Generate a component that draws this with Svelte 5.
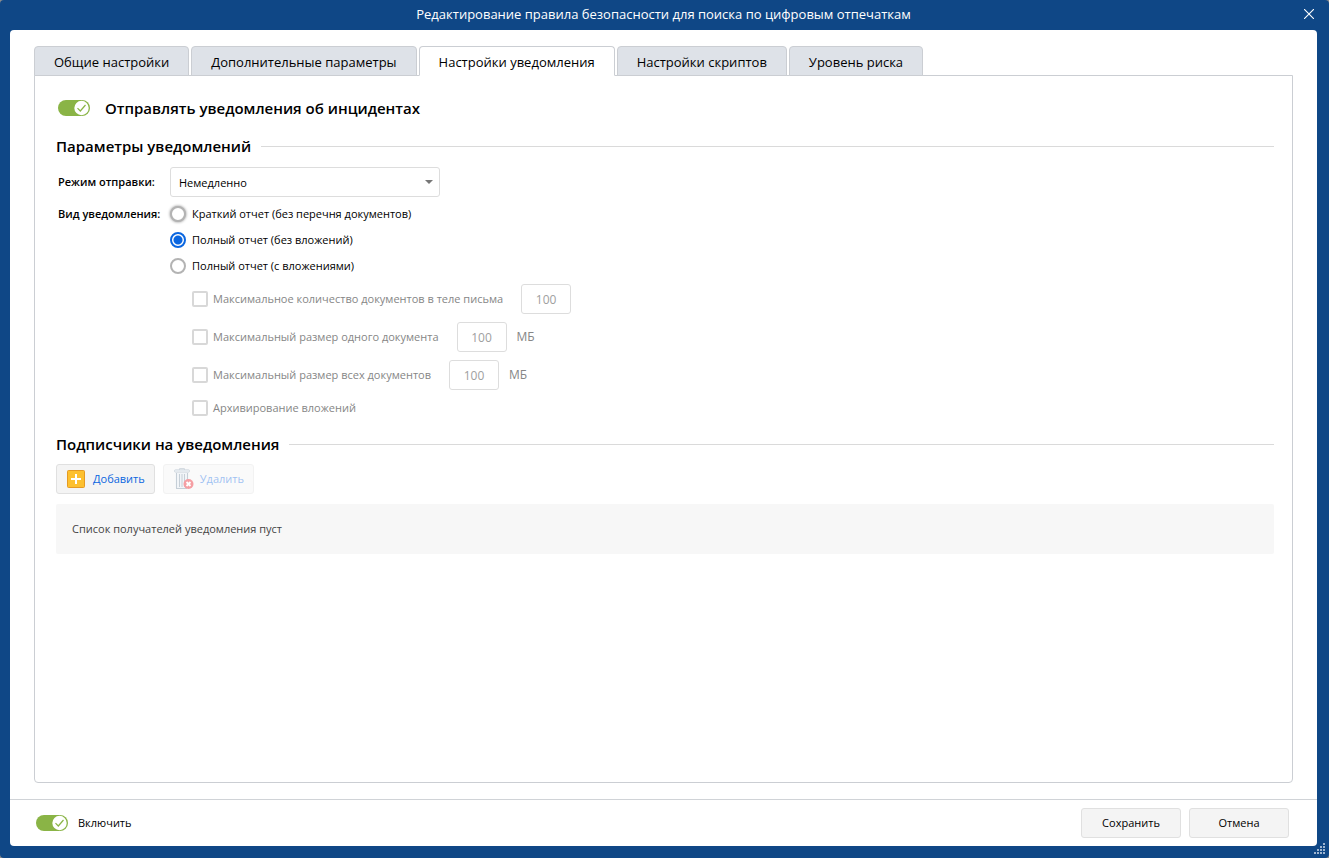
<script>
    const tabs = [
        'Общие настройки',
        'Дополнительные параметры',
        'Настройки уведомления',
        'Настройки скриптов',
        'Уровень риска'
    ];
    const reports = [
        { id: 'short', label: 'Краткий отчет (без перечня документов)' },
        { id: 'full', label: 'Полный отчет (без вложений)' },
        { id: 'attach', label: 'Полный отчет (с вложениями)' }
    ];

    let activeTab = $state(2);
    let notify = $state(true);
    let enabled = $state(true);
    let report = $state('full');
    let limits = $state([
        { id: 'count', label: 'Максимальное количество документов в теле письма', on: false, value: '100', unit: '' },
        { id: 'single', label: 'Максимальный размер одного документа', on: false, value: '100', unit: 'МБ' },
        { id: 'total', label: 'Максимальный размер всех документов', on: false, value: '100', unit: 'МБ' }
    ]);
    let archive = $state(false);

    // attachment limits only make sense for reports with attachments
    let locked = $derived(report !== 'attach');
</script>

{#snippet toggleMark()}
    <svg class="toggle" width="32" height="16" viewBox="0 0 32 16" aria-hidden="true">
        <rect class="track" width="32" height="16" rx="8" />
        <circle class="knob" cx="23.5" cy="8" r="7.2" fill="#fff" />
        <path class="tick" d="M19.5 8.2l2.8 2.8 5.2-6" fill="none" stroke="#8ab446" stroke-width="1.2" />
    </svg>
{/snippet}

<div class="window">
    <header class="titlebar">
        <h1>Редактирование правила безопасности для поиска по цифровым отпечаткам</h1>
        <button class="close" aria-label="Закрыть">
            <svg width="10" height="10" viewBox="0 0 10 10" stroke="#fff" stroke-width="1.1">
                <path d="M0 0L10 10M10 0L0 10" />
            </svg>
        </button>
    </header>

    <main class="dialog">
        <div class="body">
            <div class="tabs" role="tablist">
                {#each tabs as tab, i}
                    <button
                        class="tab"
                        class:active={activeTab === i}
                        role="tab"
                        aria-selected={activeTab === i}
                        onclick={() => (activeTab = i)}>{tab}</button>
                {/each}
            </div>

            <div class="panel" role="tabpanel">
                <label class="switch large">
                    <input type="checkbox" bind:checked={notify} />
                    {@render toggleMark()}
                    <span>Отправлять уведомления об инцидентах</span>
                </label>

                <h2>Параметры уведомлений</h2>
                <div class="form">
                    <label class="caption" for="mode">Режим отправки:</label>
                    <div class="select">
                        <select id="mode">
                            <option>Немедленно</option>
                        </select>
                        <svg width="8" height="4" viewBox="0 0 8 4" aria-hidden="true">
                            <path d="M0 0h8L4 4z" fill="#777" />
                        </svg>
                    </div>

                    <span class="caption" id="kind">Вид уведомления:</span>
                    <div class="reports" role="radiogroup" aria-labelledby="kind">
                        {#each reports as r}
                            <label class="choice" class:hovered={r.id === 'short'}>
                                <input type="radio" name="report" value={r.id} bind:group={report} />
                                {r.label}
                            </label>
                        {/each}
                    </div>

                    <div class="limits">
                        {#each limits as limit}
                            <div class="limit">
                                <label class="option">
                                    <input type="checkbox" bind:checked={limit.on} disabled={locked} />
                                    {limit.label}
                                </label>
                                <input
                                    class="number"
                                    type="text"
                                    aria-label={limit.label}
                                    bind:value={limit.value}
                                    disabled={locked} />
                                {#if limit.unit}<span class="unit">{limit.unit}</span>{/if}
                            </div>
                        {/each}
                        <label class="option">
                            <input type="checkbox" bind:checked={archive} disabled={locked} />
                            Архивирование вложений
                        </label>
                    </div>
                </div>

                <h2>Подписчики на уведомления</h2>
                <div class="toolbar">
                    <button class="btn tool">
                        <svg width="18" height="18" viewBox="0 0 18 18" aria-hidden="true">
                            <rect x="0.5" y="0.5" width="17" height="17" rx="1" fill="#fdc02f" stroke="#e59a22" />
                            <path d="M9 4v10M4 9h10" stroke="#fff" stroke-width="2" />
                        </svg>
                        Добавить
                    </button>
                    <button class="btn tool" disabled>
                        <svg class="trash" width="18" height="22" viewBox="0 0 18 22" aria-hidden="true">
                            <path d="M5.5 2V.7h5V2" fill="none" stroke="#8296a8" />
                            <rect x="0.5" y="1.8" width="15" height="2.4" rx="1" fill="#d3dfe9" stroke="#8296a8" stroke-width="0.8" />
                            <path d="M1.5 5h13v15h-13z" fill="#dfe8f0" />
                            <path d="M2.5 5v15M5.5 6v13M8 6v13M10.5 6v13M13.5 5v14M2 20.5h11" fill="none" stroke="#72889c" />
                            <circle cx="14.5" cy="16" r="5" fill="#e8101c" />
                            <path d="M12.5 14l4 4M16.5 14l-4 4" stroke="#fff" stroke-width="1.8" />
                        </svg>
                        Удалить
                    </button>
                </div>
                <p class="empty">Список получателей уведомления пуст</p>
            </div>
        </div>

        <footer>
            <label class="switch">
                <input type="checkbox" bind:checked={enabled} />
                {@render toggleMark()}
                <span>Включить</span>
            </label>
            <div class="actions">
                <button class="btn">Сохранить</button>
                <button class="btn">Отмена</button>
            </div>
        </footer>
    </main>

    <svg class="grip" width="11" height="11" viewBox="0 0 11 11" fill="#9db4d0" aria-hidden="true">
        <path d="M9 0h2v2H9zM6 3h2v2H6zM9 3h2v2H9zM3 6h2v2H3zM6 6h2v2H6zM9 6h2v2H9zM0 9h2v2H0zM3 9h2v2H3zM6 9h2v2H6zM9 9h2v2H9z" />
    </svg>
</div>

<style>
    :global(body) {
        margin: 0;
        background: #8d8d8d;
    }
    .window {
        position: relative;
        box-sizing: border-box;
        min-height: 100vh;
        padding: 0 12px 12px 10px;
        display: flex;
        flex-direction: column;
        border-radius: 4px;
        background: #0f4786;
        color: #000;
        font: 11px/18px 'Segoe UI', 'Open Sans', 'Noto Sans', sans-serif;
    }
    button,
    input,
    select {
        margin: 0;
        font: inherit;
    }

    .titlebar {
        display: flex;
        align-items: center;
        height: 28px;
        padding-bottom: 2px;
    }
    h1 {
        flex: 1;
        margin: 0;
        padding-left: 16px;
        color: #fff;
        font-size: 13px;
        font-weight: 400;
        text-align: center;
    }
    .close {
        display: flex;
        padding: 3px;
        border: none;
        background: none;
        cursor: pointer;
    }

    .dialog {
        flex: 1;
        display: flex;
        flex-direction: column;
        border-radius: 4px;
        background: #fff;
    }
    .body {
        flex: 1;
        display: flex;
        flex-direction: column;
        padding: 16px 24px;
    }

    .tabs {
        position: relative;
        display: flex;
        gap: 2px;
        margin-bottom: -1px;
    }
    .tab {
        height: 30px;
        padding: 2px 19px 0;
        border: 1px solid #cbced3;
        border-radius: 4px 4px 0 0;
        background: #dee2e8;
        color: #000;
        font-size: 13px;
        white-space: nowrap;
        cursor: pointer;
    }
    .tab.active {
        border-bottom-color: #fff;
        background: #fff;
    }

    .panel {
        flex: 1;
        padding: 20px 18px 20px 21px;
        border: 1px solid #cbced3;
        border-radius: 0 0 4px 4px;
    }

    .switch {
        display: flex;
        align-items: center;
        gap: 10px;
        width: fit-content;
        padding-left: 2px;
        cursor: pointer;
    }
    .switch input {
        position: absolute;
        opacity: 0;
    }
    .switch.large {
        gap: 15px;
        height: 24px;
        font-size: 15px;
        font-weight: 600;
    }
    .track {
        fill: #8ab446;
    }
    .switch input:not(:checked) + .toggle .track {
        fill: #b5b5b5;
    }
    .switch input:not(:checked) + .toggle .knob {
        transform: translateX(-15px);
    }
    .switch input:not(:checked) + .toggle .tick {
        display: none;
    }

    h2 {
        display: flex;
        align-items: center;
        gap: 10px;
        margin: 16px 0 10px;
        font-size: 15px;
        font-weight: 600;
        line-height: 20px;
    }
    h2::after {
        content: '';
        flex: 1;
        height: 1px;
        background: #dadada;
    }

    .form {
        display: grid;
        grid-template-columns: 112px 1fr;
        row-gap: 4px;
        padding: 1px 0 0 2px;
    }
    .caption {
        font-weight: 600;
        line-height: 26px;
        white-space: nowrap;
    }
    label.caption {
        line-height: 30px;
    }
    .select {
        position: relative;
        width: 270px;
    }
    .select select {
        appearance: none;
        width: 100%;
        height: 30px;
        padding: 1px 24px 0 8px;
        border: 1px solid #ddd;
        border-radius: 3px;
        background: #fff;
        color: #000;
    }
    .select svg {
        position: absolute;
        top: 13px;
        right: 7px;
        pointer-events: none;
    }

    .choice {
        display: flex;
        align-items: center;
        gap: 6px;
        width: fit-content;
        height: 26px;
    }
    .choice input,
    .option input {
        appearance: none;
        box-sizing: border-box;
        flex: none;
        width: 16px;
        height: 16px;
        background: #fff;
    }
    .choice input {
        border: 2px solid #b3b3b3;
        border-radius: 50%;
    }
    .choice.hovered input {
        box-shadow: 0 0 3px #888;
    }
    .choice input:checked {
        border-color: #0a66e0;
        background: radial-gradient(circle, #0a66e0 4px, #fff 5px);
    }

    .limits {
        grid-column: 2;
        display: flex;
        flex-direction: column;
        gap: 8px;
        padding: 1px 0 0 22px;
        color: #868686;
    }
    .limit {
        display: flex;
        align-items: center;
        gap: 18px;
        height: 30px;
    }
    .option {
        display: flex;
        align-items: center;
        gap: 5px;
        line-height: 20px;
    }
    .option input {
        border: 2px solid #d8d8d8;
        border-radius: 2px;
    }
    .option input:checked {
        background: #0a66e0;
    }
    .number,
    .unit {
        font-size: 12px;
    }
    .number {
        box-sizing: border-box;
        width: 50px;
        height: 30px;
        padding: 0;
        border: 1px solid #ddd;
        border-radius: 3px;
        background: #fff;
        color: #a0a0a0;
        text-align: center;
    }
    .unit {
        margin-left: -8px;
    }

    .btn {
        box-sizing: border-box;
        min-width: 100px;
        height: 30px;
        padding: 0 10px;
        border: 1px solid #e0e0e0;
        border-radius: 3px;
        background: #f4f4f4;
        color: #000;
        cursor: pointer;
    }
    .toolbar {
        display: flex;
        gap: 8px;
    }
    .tool {
        display: flex;
        align-items: center;
        gap: 8px;
        min-width: 0;
        padding: 0 9px 0 10px;
        color: #0a66e0;
    }
    .tool:disabled {
        opacity: 0.4;
        cursor: default;
    }
    .trash {
        overflow: visible;
    }
    .empty {
        margin: 10px 0 0;
        padding: 16px;
        border-radius: 2px;
        background: #f7f7f7;
        color: #444;
    }

    footer {
        display: flex;
        align-items: center;
        justify-content: space-between;
        height: 46px;
        padding: 0 28px 0 24px;
        border-top: 1px solid #d0d3d7;
    }
    .actions {
        display: flex;
        gap: 8px;
    }
    .grip {
        position: absolute;
        right: 4px;
        bottom: 4px;
    }
</style>
